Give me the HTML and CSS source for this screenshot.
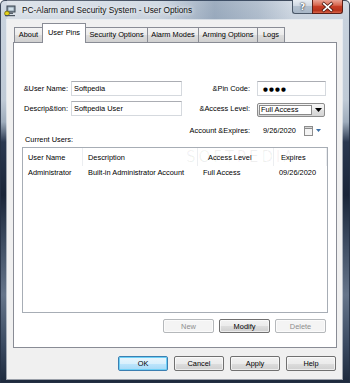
FILE: index.html
```html
<!DOCTYPE html>
<html>
<head>
<meta charset="utf-8">
<link rel="stylesheet" href="styles.css">
</head>
<body>
<div class="window">
  <div class="titlebar">
    <svg class="app-icon" viewBox="0 0 12 12" width="12" height="12">
      <rect x="3" y="1" width="8" height="6" fill="#8a9aa8" stroke="#3b4652" stroke-width="1"/>
      <rect x="4.5" y="2.5" width="5" height="3" fill="#cfe0ea"/>
      <rect x="5" y="7.5" width="4" height="1.5" fill="#56616c"/>
      <circle cx="3" cy="8.5" r="2.4" fill="#e5d21c" stroke="#6b6410" stroke-width="0.8"/>
      <rect x="1" y="10" width="10" height="1.2" fill="#4a5560"/>
    </svg>
    <span class="title">PC-Alarm and Security System - User Options</span>
    <div class="caption-btns">
      <div class="cap-btn help">?</div>
      <div class="cap-btn close">
        <svg viewBox="0 0 31 14" width="31" height="14">
          <path d="M11.5 3.5 L19.5 10.5 M19.5 3.5 L11.5 10.5" stroke="#4a1a14" stroke-width="3.4" stroke-linecap="square"/>
          <path d="M11.5 3.5 L19.5 10.5 M19.5 3.5 L11.5 10.5" stroke="#ffffff" stroke-width="1.8" stroke-linecap="square"/>
        </svg>
      </div>
    </div>
  </div>

  <div class="client">
    <div class="tabs">
      <div class="tab t-about">About</div>
      <div class="tab t-pins active">User Pins</div>
      <div class="tab t-sec">Security Options</div>
      <div class="tab t-alarm">Alarm Modes</div>
      <div class="tab t-arm">Arming Options</div>
      <div class="tab t-logs">Logs</div>
    </div>

    <div class="panel">
      <div class="form">
        <div class="lbl">&amp;User Name:</div>
        <div class="field">Softpedia</div>
        <div class="lbl r">&amp;Pin Code:</div>
        <div class="field pin">●●●●</div>

        <div class="lbl">Descrip&amp;tion:</div>
        <div class="field">Softpedia User</div>
        <div class="lbl r">&amp;Access Level:</div>
        <div class="combo">
          <div class="combo-val">Full Access</div>
          <div class="combo-arrow">
            <svg viewBox="0 0 7 4" width="7" height="4"><path d="M0 0 H7 L3.5 4 Z" fill="#000"/></svg>
          </div>
        </div>

        <div class="lbl r row3">Account &amp;Expires:</div>
        <div class="date">
          <span>9/26/2020</span>
          <svg class="cal" viewBox="0 0 9 10" width="9" height="10">
            <rect x="0.5" y="0.5" width="8" height="9" fill="#f4f4f4" stroke="#8d8d8d"/>
            <rect x="0.5" y="0.5" width="8" height="2" fill="#d8d8d8" stroke="#8d8d8d"/>
          </svg>
          <svg class="darrow" viewBox="0 0 5 3" width="5" height="3"><path d="M0 0 H5 L2.5 3 Z" fill="#3a6ea5"/></svg>
        </div>
      </div>

      <div class="cu-label">Current Users:</div>

      <div class="list">
        <div class="lh">
          <div class="c1">User Name</div>
          <div class="c2">Description</div>
          <div class="c3">Access Level</div>
          <div class="c4">Expires</div>
        </div>
        <div class="lr">
          <div class="c1">Administrator</div>
          <div class="c2">Built-in Administrator Account</div>
          <div class="c3">Full Access</div>
          <div class="c4">09/26/2020</div>
        </div>
        <div class="wm">SOFTPEDIA</div>
      </div>

      <div class="list-btns">
        <div class="btn disabled">New</div>
        <div class="btn">Modify</div>
        <div class="btn disabled">Delete</div>
      </div>
    </div>

    <div class="dlg-btns">
      <div class="btn dlg default">OK</div>
      <div class="btn dlg">Cancel</div>
      <div class="btn dlg">Apply</div>
      <div class="btn dlg">Help</div>
    </div>
  </div>
</div>
</body>
</html>
```

FILE: styles.css
```css
* { box-sizing: border-box; }

html, body {
  margin: 0;
  padding: 0;
  background: #ffffff;
}

body {
  font-family: "Liberation Sans", Arial, sans-serif;
  font-size: 7.4px;
  color: #000;
}

.window {
  width: 350px;
  height: 383px;
  display: flex;
  flex-direction: column;
  padding: 0 8px 4px 7px;
  border-radius: 5px 5px 0 0;
  background: linear-gradient(180deg,
    #d4dce5 0px, #c8d2dd 20px, #bfcad6 100px, #9eacbc 122px,
    #2a3850 142px, #1a2538 195px, #3f4e63 245px, #66758a 295px,
    #3a4a61 345px, #1d293c 383px);
  box-shadow: inset 0 0 0 1px rgba(36, 48, 68, 0.85);
}

/* ---------- title bar ---------- */
.titlebar {
  height: 20px;
  flex: none;
  display: flex;
  align-items: flex-start;
  background: linear-gradient(90deg, rgba(255,255,255,0.25) 0%, rgba(255,255,255,0) 45%,
    rgba(60,90,125,0.35) 62%, rgba(60,90,125,0.2) 75%, rgba(255,255,255,0) 85%);
}

.app-icon {
  margin: 5px 0 0 -3px;
  flex: none;
}

.title {
  margin: 5px 0 0 6px;
  font-size: 8.3px;
  line-height: 10px;
  color: #111;
  white-space: nowrap;
  text-shadow: 0 0 4px #ffffff, 0 0 6px rgba(255,255,255,0.8);
}

.caption-btns {
  margin-left: auto;
  margin-right: -1px;
  display: flex;
}

.cap-btn {
  height: 14px;
  border: 1px solid #4b5868;
  border-top: none;
  display: flex;
  align-items: center;
  justify-content: center;
}

.cap-btn.help {
  width: 20px;
  border-right: none;
  border-radius: 0 0 0 3px;
  background: linear-gradient(180deg, #e9eef3 0%, #cfd8e2 45%, #b3c0ce 50%, #a9b7c7 100%);
  color: #fff;
  font-family: "DejaVu Sans", sans-serif;
  font-weight: bold;
  font-size: 9px;
  text-shadow: 0 0 2px #2a3440, 0 0 1px #2a3440;
}

.cap-btn.close {
  width: 31px;
  border-color: #5c1f17;
  border-radius: 0 0 3px 0;
  background: linear-gradient(180deg, #eaa496 0%, #d8674f 40%, #c73e27 50%, #b8341c 80%, #d9654a 100%);
}

/* ---------- client area ---------- */
.client {
  flex: 1;
  display: flex;
  flex-direction: column;
  background: #f0f0f0;
  padding: 3px 5px 0 6px;
  outline: 1px solid rgba(255, 255, 255, 0.55);
}

.tabs {
  height: 19px;
  flex: none;
  display: flex;
  align-items: flex-end;
  padding-left: 1px;
  position: relative;
  z-index: 2;
}

.tab {
  height: 15px;
  margin-left: -1px;
  border: 1px solid #898c95;
  border-bottom: none;
  background: linear-gradient(180deg, #f3f3f3 0%, #ebebeb 50%, #dddddd 51%, #d0d0d0 100%);
  display: flex;
  align-items: center;
  justify-content: center;
  white-space: nowrap;
  line-height: 1;
}

.tab.active {
  height: 20px;
  margin-bottom: -1px;
  background: #ffffff;
  padding-bottom: 1px;
}

.t-about { width: 29px; margin-left: 0; }
.t-pins { width: 44px; }
.t-sec { width: 63px; }
.t-alarm { width: 52px; }
.t-arm { width: 60px; }
.t-logs { width: 28px; }

.panel {
  height: 306px;
  flex: none;
  border: 1px solid #898c95;
  background: #ffffff;
  display: flex;
  flex-direction: column;
}

/* ---------- form ---------- */
.form {
  margin-top: 38px;
  display: grid;
  grid-template-columns: 57px 111px 75px 69px;
  grid-template-rows: 15px 15px 19px;
  row-gap: 5px;
}

.lbl {
  display: flex;
  align-items: center;
  justify-content: flex-end;
  padding-right: 3px;
  white-space: nowrap;
}

.lbl.r { padding-right: 7px; }

.lbl.row3 { grid-column: 3; grid-row: 3; }

.field {
  border: 1px solid #d5d9de;
  border-top-color: #abadb3;
  background: #ffffff;
  display: flex;
  align-items: center;
  padding-left: 2px;
  white-space: nowrap;
}

.field.pin {
  padding-left: 5px;
  font-family: "DejaVu Sans", sans-serif;
  font-size: 5.6px;
  letter-spacing: 1.1px;
}

.combo {
  align-self: center;
  height: 14px;
  margin-top: 2px;
  width: 68px;
  border: 1px solid #8c8c8c;
  border-radius: 2px;
  background: linear-gradient(180deg, #f4f4f4 0%, #ededed 50%, #e0e0e0 51%, #d4d4d4 100%);
  display: flex;
}

.combo-val {
  flex: 1;
  margin: 1px 0 1px 1px;
  background: #ffffff;
  border: 1px solid #8a8a8a;
  display: flex;
  align-items: center;
  padding-left: 1px;
  white-space: nowrap;
}

.combo-arrow {
  width: 12px;
  display: flex;
  align-items: center;
  justify-content: center;
}

.date {
  grid-column: 4;
  grid-row: 3;
  display: flex;
  align-items: center;
  padding: 0 5px 0 6px;
}

.date .cal { margin-left: auto; }
.date .darrow { margin-left: 3px; }

.cu-label {
  margin: -5px 0 0 11px;
  line-height: 10px;
}

/* ---------- list ---------- */
.list {
  position: relative;
  margin: 2px 0 0 8px;
  width: 306px;
  height: 166px;
  flex: none;
  border: 1px solid #a7adb5;
  background: #ffffff;
  overflow: hidden;
}

.lh, .lr {
  display: flex;
  align-items: center;
  white-space: nowrap;
}

.lh { height: 18px; }
.lr { height: 13px; }

.lh > div {
  height: 100%;
  display: flex;
  align-items: center;
  border-right: 1px solid #eceef1;
}

.c1 { width: 60px; padding-left: 5px; }
.c2 { width: 115px; padding-left: 5px; }
.c3 { width: 76px; padding-left: 5px; }
.c4 { flex: 1; padding-left: 5px; }

.lh .c3 { padding-left: 10px; }
.lh .c4 { padding-left: 7px; }

.wm {
  position: absolute;
  top: 0;
  left: 163px;
  font-family: "DejaVu Sans", sans-serif;
  font-size: 15px;
  letter-spacing: 3px;
  color: rgba(0, 0, 0, 0.06);
  pointer-events: none;
}

/* ---------- buttons ---------- */
.list-btns {
  display: flex;
  justify-content: flex-end;
  gap: 5px;
  margin-top: 6px;
  padding-right: 10px;
}

.btn {
  width: 51px;
  height: 14px;
  border: 1px solid #707070;
  border-radius: 2px;
  background: linear-gradient(180deg, #f2f2f2 0%, #ebebeb 50%, #dddddd 51%, #cfcfcf 100%);
  box-shadow: inset 0 0 0 1px rgba(255, 255, 255, 0.6);
  display: flex;
  align-items: center;
  justify-content: center;
  white-space: nowrap;
}

.btn.disabled {
  border-color: #b5b8bb;
  background: #f4f4f4;
  color: #8d8d8d;
}

.dlg-btns {
  display: flex;
  justify-content: flex-end;
  gap: 6px;
  margin-top: 8px;
  padding-right: 1px;
}

.btn.dlg {
  width: 50px;
  height: 15px;
}

.btn.default {
  border-color: #3c7fb1;
  background: linear-gradient(180deg, #eaf6fd 0%, #d9f0fc 50%, #bee6fd 51%, #a7d9f5 100%);
  box-shadow: inset 0 0 0 1px #6dd0f7;
}
```
